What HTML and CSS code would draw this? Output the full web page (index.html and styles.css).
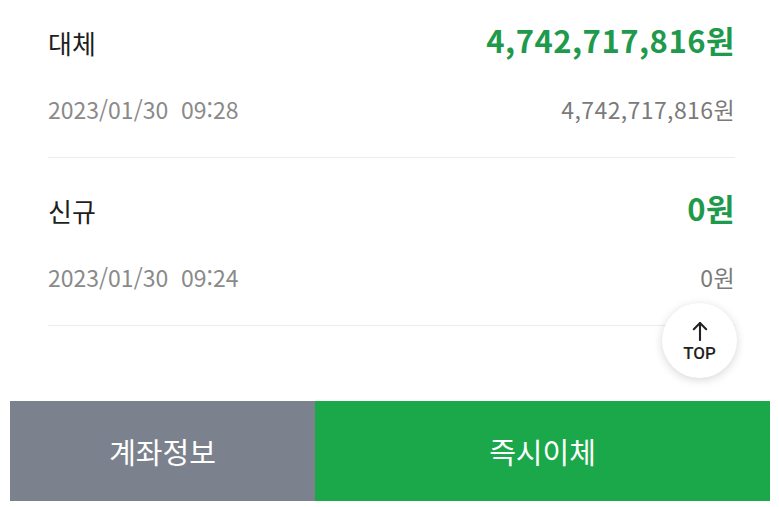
FILE: index.html
```html
<!DOCTYPE html>
<html lang="ko">
<head>
<meta charset="utf-8">
<link rel="stylesheet" href="styles.css">
</head>
<body>
<div class="page">
  <div class="list">
    <div class="item">
      <div class="row main">
        <span class="label">대체</span>
        <span class="amount">4,742,717,816원</span>
      </div>
      <div class="row sub">
        <span class="date">2023/01/30&nbsp; 09:28</span>
        <span class="balance">4,742,717,816원</span>
      </div>
    </div>
    <div class="item">
      <div class="row main">
        <span class="label">신규</span>
        <span class="amount">0원</span>
      </div>
      <div class="row sub">
        <span class="date">2023/01/30&nbsp; 09:24</span>
        <span class="balance">0원</span>
      </div>
    </div>
  </div>
  <div class="bar">
    <div class="btn info">계좌정보</div>
    <div class="btn transfer">즉시이체</div>
  </div>
  <div class="top-btn">
    <svg width="16" height="20" viewBox="0 0 16 20" fill="none" stroke="#222" stroke-width="2.1" stroke-linecap="round" stroke-linejoin="round">
      <path d="M8 19V2"/>
      <path d="M1.8 8.2L8 2L14.2 8.2"/>
    </svg>
    <span>TOP</span>
  </div>
</div>
</body>
</html>
```

FILE: styles.css
```css
* { box-sizing: border-box; }
html, body { margin: 0; padding: 0; background: #fff; }
body {
  font-family: "Noto Sans CJK KR", "Noto Sans", sans-serif;
  color: #222;
}
.page {
  position: relative;
  width: 779px;
  height: 507px;
  display: flex;
  flex-direction: column;
  overflow: hidden;
}
.list {
  flex: 1;
  padding: 0 44px 0 48px;
}
.item {
  display: flex;
  flex-direction: column;
  gap: 32px;
  padding: 32px 0 33px;
  border-bottom: 1px solid #ececec;
}
.item:first-child { padding-top: 22px; }
.row {
  display: flex;
  justify-content: space-between;
  align-items: center;
}
.row.main { height: 40px; }
.row.sub { height: 30px; }
.label {
  font-size: 26px;
  color: #1e1e1e;
}
.amount {
  font-size: 31px;
  font-weight: 700;
  color: #1f9a4c;
  letter-spacing: 0.5px;
  margin-top: -6px;
}
.date {
  font-size: 23px;
  color: #8a8a8a;
}
.balance {
  font-size: 23px;
  color: #7a7a7a;
  letter-spacing: 0.4px;
}
.bar {
  display: flex;
  height: 100px;
  margin: 0 9px 6px 10px;
}
.btn {
  display: flex;
  align-items: center;
  justify-content: center;
  color: #fff;
  font-size: 29px;
}
.info {
  width: 305px;
  background: #7c828d;
}
.transfer {
  flex: 1;
  background: #1ba84a;
}
.top-btn {
  position: absolute;
  left: 662px;
  top: 303px;
  width: 75px;
  height: 75px;
  border-radius: 50%;
  background: #fff;
  box-shadow: 0 2px 10px rgba(0,0,0,0.16);
  display: flex;
  flex-direction: column;
  align-items: center;
  justify-content: center;
  gap: 4px;
}
.top-btn span {
  font-family: "Roboto", "Noto Sans", sans-serif;
  font-size: 17px;
  font-weight: 500;
  color: #222;
  line-height: 16px;
}
```
